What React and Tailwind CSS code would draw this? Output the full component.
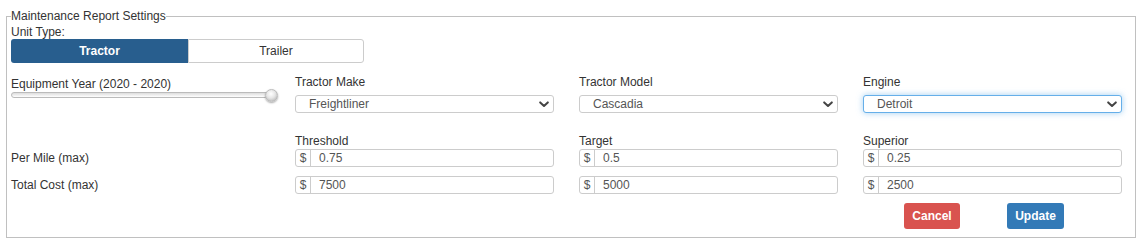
import React from "react";

function Chevron() {
  return (
    <svg width="10" height="7" viewBox="0 0 10 7" className="shrink-0">
      <path d="M1.2 1.4 L5 5 L8.8 1.4" fill="none" stroke="#444" strokeWidth="2" strokeLinecap="round" strokeLinejoin="round" />
    </svg>
  );
}

function FakeSelect({ value, focused }) {
  return (
    <div
      className={
        focused
          ? "flex h-[18px] items-center justify-between rounded-[3px] border border-[#66afe9] bg-white pl-[13px] pr-[4px] text-[#555] shadow-[0_0_6px_rgba(102,175,233,0.6)]"
          : "flex h-[18px] items-center justify-between rounded-[3px] border border-[#ccc] bg-white pl-[13px] pr-[4px] text-[#555]"
      }
    >
      <span>{value}</span>
      <Chevron />
    </div>
  );
}

function MoneyInput({ value }) {
  return (
    <div className="flex h-[18px] rounded-[3px] border border-[#ccc] bg-white text-[#555]">
      <div className="flex w-[15px] items-center justify-center border-r border-[#ccc]">$</div>
      <div className="flex items-center pl-[8px]">{value}</div>
    </div>
  );
}

export default function App() {
  return (
    <div className="bg-white pl-[6px] pr-[8px] pt-[9px] font-['Liberation_Sans',Arial,sans-serif] text-[12px] leading-[14px] text-[#333]">
      <fieldset className="m-0 min-w-0 border border-[#c0c0c0] px-[4px] pb-[8px]">
        <legend className="p-0">Maintenance Report Settings</legend>
        <div className="mt-[2px]">Unit Type:</div>
        <div className="flex h-[24px] w-[353px]">
          <div className="flex w-[177px] items-center justify-center rounded-l-[3px] bg-[#285e8e] font-bold text-white">
            Tractor
          </div>
          <div className="flex w-[176px] items-center justify-center rounded-r-[3px] border border-[#ccc] bg-white">
            Trailer
          </div>
        </div>

        <div className="mt-[12px] grid grid-cols-[259px_259px_259px_259px] gap-x-[25px]">
          <div className="pt-[2px]">
            <div>Equipment Year (2020 - 2020)</div>
            <div className="relative mt-[1px] h-[7px] w-[259px]">
              <div className="h-[6px] w-full rounded-[3px] border border-[#bbb] bg-gradient-to-b from-[#ddd] to-white" />
              <div className="absolute right-[-8px] top-[-3px] h-[13px] w-[13px] rounded-full border border-[#bbb] bg-[radial-gradient(circle_at_45%_35%,#ffffff_0%,#e6e6e6_45%,#a8a8a8_100%)] shadow-[0_1px_2px_rgba(0,0,0,0.35)]" />
            </div>
          </div>
          <div>
            <div>Tractor Make</div>
            <div className="mt-[6px]">
              <FakeSelect value="Freightliner" />
            </div>
          </div>
          <div>
            <div>Tractor Model</div>
            <div className="mt-[6px]">
              <FakeSelect value="Cascadia" />
            </div>
          </div>
          <div>
            <div>Engine</div>
            <div className="mt-[6px]">
              <FakeSelect value="Detroit" focused />
            </div>
          </div>
        </div>

        <div className="mt-[21px] grid grid-cols-[259px_259px_259px_259px] gap-x-[25px]">
          <div />
          <div className="h-[15px]">Threshold</div>
          <div className="h-[15px]">Target</div>
          <div className="h-[15px]">Superior</div>

          <div className="flex h-[18px] items-center">Per Mile (max)</div>
          <MoneyInput value="0.75" />
          <MoneyInput value="0.5" />
          <MoneyInput value="0.25" />

          <div className="mt-[9px] flex h-[18px] items-center">Total Cost (max)</div>
          <div className="mt-[9px]"><MoneyInput value="7500" /></div>
          <div className="mt-[9px]"><MoneyInput value="5000" /></div>
          <div className="mt-[9px]"><MoneyInput value="2500" /></div>
        </div>

        <div className="mt-[9px] grid grid-cols-[259px_259px_259px_259px] gap-x-[25px]">
          <div />
          <div />
          <div />
          <div className="flex pl-[41px]">
            <div className="flex h-[26px] w-[56px] items-center justify-center rounded-[3px] bg-[#d9534f] font-bold text-white">
              Cancel
            </div>
            <div className="ml-[47px] flex h-[26px] w-[57px] items-center justify-center rounded-[3px] bg-[#337ab7] font-bold text-white">
              Update
            </div>
          </div>
        </div>
      </fieldset>
    </div>
  );
}
